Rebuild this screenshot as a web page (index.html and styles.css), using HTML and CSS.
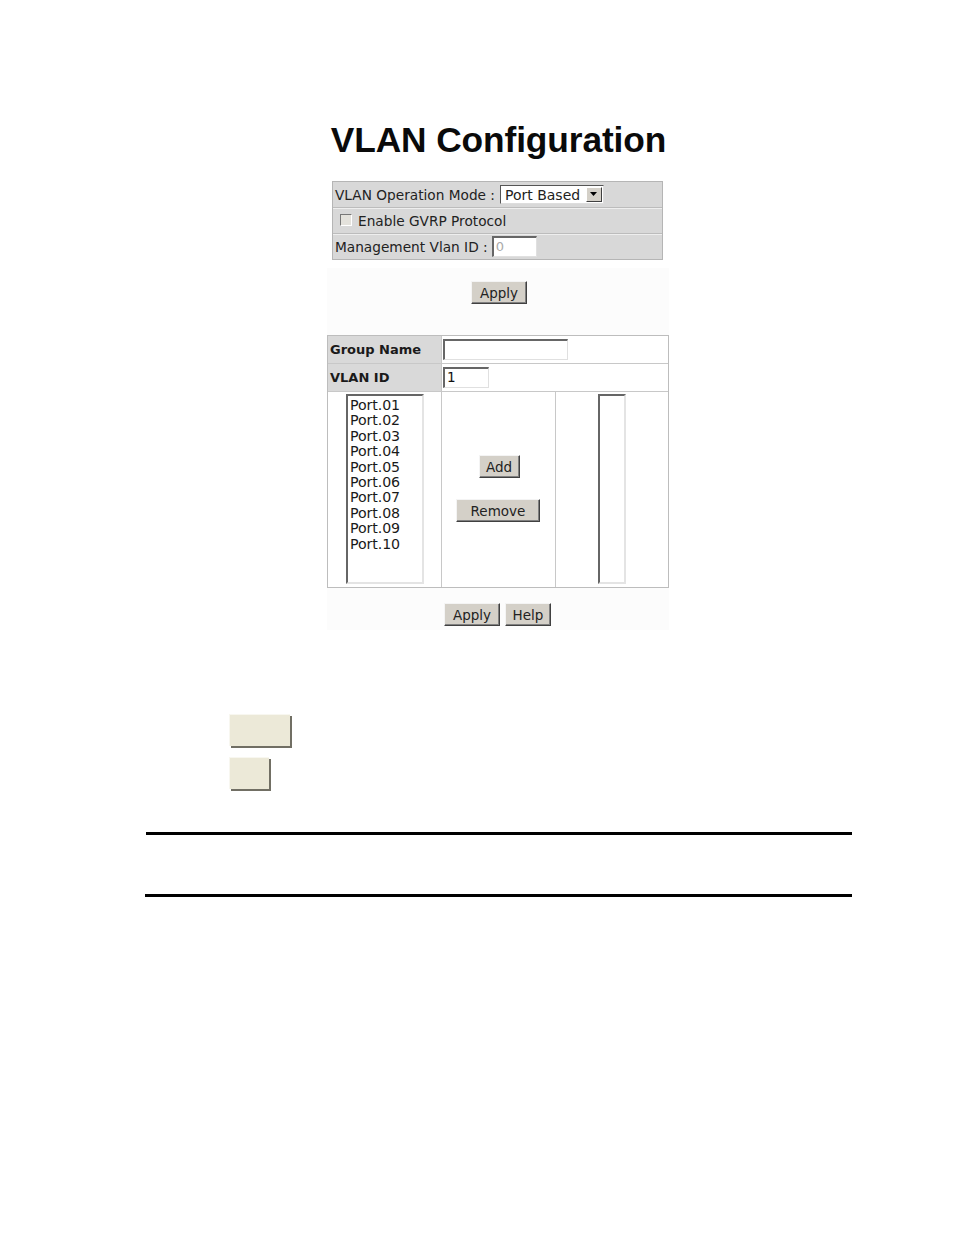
FILE: index.html
```html
<!DOCTYPE html>
<html>
<head>
<meta charset="utf-8">
<link rel="stylesheet" href="styles.css">
</head>
<body>
<div class="screen">
  <h1 class="title">VLAN Configuration</h1>
  <div class="panel1">
    <div class="row">VLAN Operation Mode :
      <span class="select"><span class="sel-text">Port Based</span><span class="sel-btn"><svg width="9" height="5" viewBox="0 0 9 5"><path d="M1 0H8L4.5 4Z" fill="#000"/></svg></span></span>
    </div>
    <div class="row"><span class="check"></span>Enable GVRP Protocol</div>
    <div class="row">Management Vlan ID : <span class="input small-in">0</span></div>
  </div>
  <div class="btn-row first"><span class="btn w55">Apply</span></div>
  <div class="panel2">
    <div class="p2-row r1">
      <div class="lbl">Group Name</div>
      <div class="val"><span class="input gname"></span></div>
    </div>
    <div class="p2-row r2">
      <div class="lbl">VLAN ID</div>
      <div class="val"><span class="input vid">1</span></div>
    </div>
    <div class="p2-row r3">
      <div class="c c1">
        <div class="list ports">
          <div>Port.01</div><div>Port.02</div><div>Port.03</div><div>Port.04</div><div>Port.05</div>
          <div>Port.06</div><div>Port.07</div><div>Port.08</div><div>Port.09</div><div>Port.10</div>
        </div>
      </div>
      <div class="c c2">
        <span class="btn add">Add</span>
        <span class="btn remove">Remove</span>
      </div>
      <div class="c c3"><div class="list members"></div></div>
    </div>
  </div>
  <div class="btn-row last"><span class="btn apply2">Apply</span><span class="btn help">Help</span></div>
</div>
<div class="beige-group">
  <div class="beige b1"></div>
  <div class="beige b2"></div>
</div>
<div class="rule rule1"></div>
<div class="rule rule2"></div>
</body>
</html>
```
FILE: styles.css
```css
html, body {
  margin: 0;
  padding: 0;
  background: #ffffff;
}
body {
  font-family: "DejaVu Sans", Verdana, sans-serif;
  color: #111;
}
.screen {
  margin-left: 327px;
  width: 342px;
  padding-top: 116px;
  background: linear-gradient(#fff 0, #fff 268px, #fcfcfc 268px);
}
.title {
  margin: 0;
  font-family: "Liberation Sans", Arial, sans-serif;
  font-weight: bold;
  font-size: 35.3px;
  line-height: 48px;
  text-align: center;
  color: #0a0a0a;
  letter-spacing: -0.1px;
  padding-left: 1px;
  height: 65px;
}
.panel1 {
  margin-left: 5px;
  width: 329px;
  border: 1px solid #b5b5b5;
  background: #d8d8d8;
}
.row {
  height: 25px;
  display: flex;
  align-items: center;
  font-size: 13.7px;
  padding-left: 2px;
  color: #222;
  border-top: 1px solid #bcbcbc;
  box-shadow: inset 0 1px #eeeeee;
}
.row:first-child { border-top: none; box-shadow: none; }
.select {
  display: inline-flex;
  align-items: center;
  margin-left: 5px;
  width: 104px;
  height: 19px;
  background: #fff;
  border-top: 1px solid #555;
  border-left: 1px solid #555;
  border-right: 1px solid #ddd;
  border-bottom: 1px solid #ddd;
  box-sizing: border-box;
  font-size: 14px;
}
.sel-text { padding-left: 4px; flex: 1; }
.sel-btn {
  width: 16px;
  height: 15px;
  margin-right: 1px;
  background: #d4d0c8;
  border: 1px solid;
  border-color: #fff #404040 #404040 #fff;
  box-sizing: border-box;
  display: flex;
  align-items: center;
  justify-content: center;
}
.check {
  width: 12px;
  height: 12px;
  margin-left: 5px;
  margin-right: 6px;
  box-sizing: border-box;
  border-top: 1px solid #777;
  border-left: 1px solid #777;
  border-right: 1px solid #fff;
  border-bottom: 1px solid #fff;
  background: #e4e2dc;
  margin-top: -2px;
}
.input {
  display: inline-block;
  background: #fff;
  box-sizing: border-box;
  border-top: 2px solid #666;
  border-left: 2px solid #666;
  border-right: 1px solid #e0e0e0;
  border-bottom: 1px solid #e0e0e0;
  font-size: 13px;
  line-height: 17px;
  padding-left: 2px;
}
.small-in {
  width: 45px;
  height: 21px;
  color: #aaa;
  margin-left: 4px;
}
.btn-row {
  display: flex;
  justify-content: center;
}
.btn-row.first {
  height: 75px;
  padding-top: 21px;
  box-sizing: border-box;
}
.btn {
  display: inline-flex;
  align-items: center;
  justify-content: center;
  background: #d4d0c8;
  border: 1px solid;
  border-color: #f4f4f4 #404040 #404040 #f4f4f4;
  box-shadow: inset -1px -1px #808080;
  box-sizing: border-box;
  font-size: 13.5px;
  color: #222;
  height: 23px;
}
.w55 { width: 56px; margin-left: 2px; }
.panel2 {
  width: 342px;
  border: 1px solid #bdbdbd;
  box-sizing: border-box;
  background: #fff;
}
.p2-row {
  display: flex;
  border-top: 1px solid #c8c8c8;
}
.p2-row.r1 { border-top: none; height: 27px; }
.p2-row.r2 { height: 27px; }
.p2-row.r3 { height: 195px; }
.lbl {
  width: 114px;
  background: #d9d9d9;
  font-weight: bold;
  font-size: 13px;
  display: flex;
  align-items: center;
  padding-left: 2px;
  box-sizing: border-box;
  border-right: 1px solid #c8c8c8;
  color: #1a1a1a;
}
.val {
  flex: 1;
  display: flex;
  align-items: center;
  padding-left: 1px;
}
.gname { width: 125px; height: 21px; }
.vid { width: 46px; height: 21px; font-size: 13.5px; }
.c {
  box-sizing: border-box;
  border-right: 1px solid #c8c8c8;
}
.c1 { width: 114px; padding-left: 18px; padding-top: 2px; }
.c2 {
  width: 114px;
  display: flex;
  flex-direction: column;
  align-items: center;
  padding-top: 63px;
}
.c3 { flex: 1; padding-left: 42px; padding-top: 2px; border-right: none; }
.list {
  background: #fff;
  box-sizing: border-box;
  border-top: 2px solid #666;
  border-left: 2px solid #666;
  border-right: 2px solid #e4e4e4;
  border-bottom: 2px solid #e4e4e4;
  height: 190px;
}
.ports {
  width: 78px;
  font-size: 14.2px;
  line-height: 15.4px;
  padding-left: 2px;
  padding-top: 2px;
  color: #1a1a1a;
  letter-spacing: -0.1px;
}
.members { width: 28px; }
.add { width: 41px; margin-left: 1px; }
.remove { width: 84px; margin-top: 21px; margin-left: -1px; }
.btn-row.last {
  padding-top: 15px;
  padding-bottom: 4px;
  gap: 5px;
}
.apply2 { width: 56px; margin-left: -1px; }
.help { width: 46px; }
.beige-group {
  margin-left: 229px;
  padding-top: 84px;
}
.beige {
  background: #ece9d8;
  box-sizing: border-box;
  border-top: 1px solid #f8f7f0;
  border-left: 1px solid #f8f7f0;
  box-shadow: 2px 2px 0 #716f64;
}
.b1 { width: 61px; height: 32px; }
.b2 { width: 40px; height: 32px; margin-top: 11px; }
.rule {
  height: 3px;
  background: #000;
}
.rule1 { margin-left: 146px; width: 706px; margin-top: 43px; }
.rule2 { margin-left: 145px; width: 707px; margin-top: 59px; }
```
